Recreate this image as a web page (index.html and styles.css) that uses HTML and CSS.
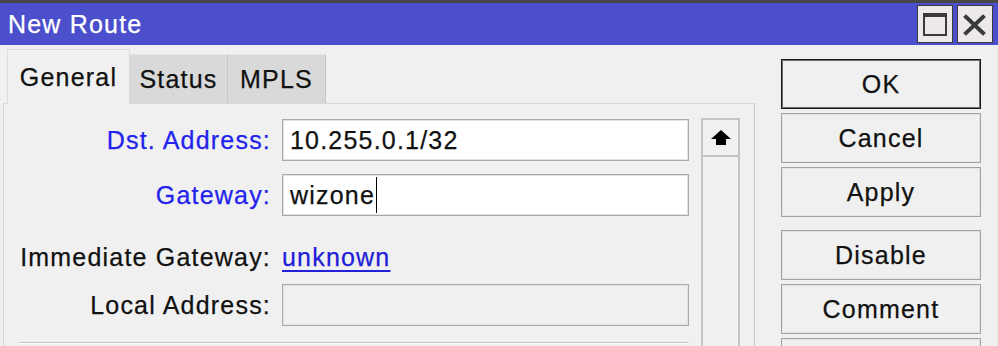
FILE: index.html
```html
<!DOCTYPE html>
<html>
<head>
<meta charset="utf-8">
<link rel="stylesheet" href="styles.css">
</head>
<body>
<div class="window">
  <div class="topstrip"></div>
  <div class="titlebar">
    <div class="title">New Route</div>
    <div class="tbtns">
      <div class="tbtn">
        <svg width="36" height="38" viewBox="0 0 36 38">
          <rect x="7" y="9" width="22" height="21" fill="none" stroke="#3a3a3a" stroke-width="2"/>
          <rect x="6" y="8" width="24" height="4" fill="#3a3a3a"/>
        </svg>
      </div>
      <div class="tbtn">
        <svg width="36" height="38" viewBox="0 0 36 38">
          <path d="M9 12 L26 28 M26 12 L9 28" stroke="#3a3a3a" stroke-width="4" stroke-linecap="square"/>
        </svg>
      </div>
    </div>
  </div>
  <div class="main">
    <div class="left">
      <div class="tabs">
        <div class="tab active">General</div>
        <div class="tab">Status</div>
        <div class="tab last">MPLS</div>
      </div>
      <div class="panel">
        <div class="form">
          <div class="row">
            <div class="label blue">Dst. Address:</div>
            <div class="input">10.255.0.1/32</div>
          </div>
          <div class="row r2">
            <div class="label blue">Gateway:</div>
            <div class="input">wizone<span class="caret"></span></div>
          </div>
          <div class="row r3">
            <div class="label">Immediate Gateway:</div>
            <div class="link">unknown</div>
          </div>
          <div class="row r4">
            <div class="label">Local Address:</div>
            <div class="input disabled"></div>
          </div>
          <div class="sep"></div>
        </div>
        <div class="scroll">
          <div class="sbtn">
            <svg width="22" height="16" viewBox="0 0 22 16">
              <path d="M11 0 L21 9 L16 9 L16 15 L6 15 L6 9 L1 9 Z" fill="#000"/>
            </svg>
          </div>
          <div class="track"></div>
        </div>
      </div>
    </div>
    <div class="buttons">
      <div class="btn ok">OK</div>
      <div class="btn">Cancel</div>
      <div class="btn">Apply</div>
      <div class="btn gap">Disable</div>
      <div class="btn">Comment</div>
      <div class="btn"></div>
    </div>
  </div>
</div>
</body>
</html>
```
FILE: styles.css
```css
html, body {
  margin: 0;
  padding: 0;
  width: 998px;
  height: 346px;
  overflow: hidden;
  background: #f0f0f0;
}
.window {
  width: 998px;
  height: 346px;
  overflow: hidden;
  font-family: "Liberation Sans", Arial, sans-serif;
  font-size: 25px;
  letter-spacing: 1.2px;
  color: #111;
  -webkit-text-stroke: 0.25px currentColor;
  background: #f0f0f0;
}
.topstrip {
  height: 3px;
  background: #474747;
}
.titlebar {
  height: 42px;
  background: #4c4fcc;
  display: flex;
  align-items: center;
  justify-content: space-between;
  padding-left: 8px;
  padding-right: 5px;
}
.title {
  color: #fff;
  line-height: 42px;
}
.tbtns {
  display: flex;
  gap: 4px;
  align-self: flex-start;
  margin-top: 2px;
}
.tbtn {
  width: 34px;
  height: 36px;
  background: #ece8ec;
  border: 1px solid #3c3c3c;
  display: flex;
  align-items: center;
  justify-content: center;
  overflow: hidden;
}
.tbtn svg {
  flex: none;
}
.main {
  display: flex;
  padding-top: 3px;
}
.left {
  width: 755px;
  padding-left: 3px;
  box-sizing: border-box;
}
.tabs {
  display: flex;
  align-items: flex-end;
  height: 55px;
  padding-left: 4px;
}
.tab {
  height: 49px;
  line-height: 49px;
  width: 98px;
  box-sizing: border-box;
  text-align: center;
  background: #d9d9d9;
  border-right: 1px solid #c6c6c6;
  border-top: 1px solid #e6e6e6;
}
.tab.active {
  height: 55px;
  line-height: 55px;
  width: 123px;
  background: #f0f0f0;
  border: 1px solid #dcdcdc;
  border-bottom: none;
  position: relative;
  z-index: 1;
  margin-bottom: -1px;
}
.tab.last {
  width: 98px;
}
.panel {
  border-top: 1px solid #d8d8d8;
  border-left: 1px solid #d8d8d8;
  border-right: 1px solid #c8c8c8;
  height: 250px;
  display: flex;
  padding-right: 14px;
}
.form {
  padding-top: 15px;
}
.row {
  display: flex;
  align-items: center;
  height: 42px;
}
.r2 { margin-top: 13px; }
.r3 { margin-top: 20px; }
.r4 { margin-top: 6px; }
.label {
  width: 267px;
  text-align: right;
  margin-right: 11px;
  white-space: nowrap;
}
.blue {
  color: #2323ec;
}
.input {
  width: 407px;
  height: 42px;
  box-sizing: border-box;
  background: #fff;
  border: 1px solid #a9a9a9;
  box-shadow: inset 0 0 0 1px #e2e2e2;
  padding-left: 7px;
  line-height: 40px;
  display: flex;
  align-items: center;
}
.input.disabled {
  background: #f0f0f0;
}
.caret {
  display: inline-block;
  width: 1px;
  height: 36px;
  background: #000;
  margin-left: 1px;
}
.link {
  color: #2020d8;
  text-decoration: underline;
  text-underline-offset: 4px;
  text-decoration-thickness: 2px;
}
.sep {
  margin-top: 16px;
  margin-left: 15px;
  width: 670px;
  height: 1px;
  background: #c8c8c8;
  border-bottom: 1px solid #fafafa;
}
.scroll {
  margin-left: 12px;
  margin-top: 14px;
  width: 39px;
  display: flex;
  flex-direction: column;
}
.sbtn {
  height: 39px;
  box-sizing: border-box;
  border: 2px solid #c4c4c4;
  display: flex;
  align-items: center;
  justify-content: center;
}
.track {
  flex: 1;
  border-left: 2px solid #c4c4c4;
  border-right: 2px solid #c4c4c4;
}
.buttons {
  margin-left: 26px;
  padding-top: 11px;
  display: flex;
  flex-direction: column;
  gap: 4px;
}
.btn {
  width: 200px;
  height: 50px;
  box-sizing: border-box;
  border: 1px solid #a2a2a2;
  box-shadow: inset 0 0 0 1px #e4e4e4;
  display: flex;
  align-items: center;
  justify-content: center;
  flex: none;
}
.btn.ok {
  border: 1px solid #1a1a1a;
  box-shadow: inset 0 0 0 1px #6e6e6e;
}
.btn.gap {
  margin-top: 9px;
}
```
